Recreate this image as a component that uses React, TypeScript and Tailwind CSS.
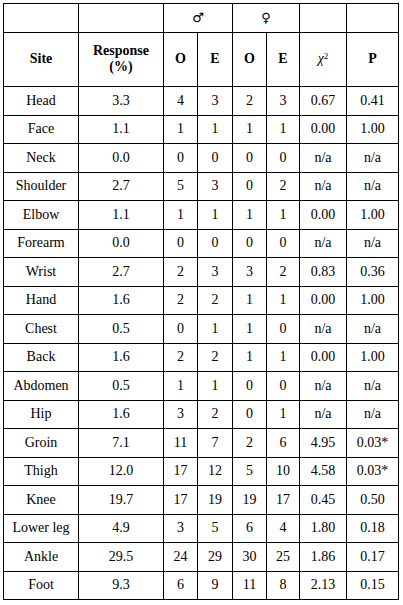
const rows: string[][] = [
  ["Head", "3.3", "4", "3", "2", "3", "0.67", "0.41"],
  ["Face", "1.1", "1", "1", "1", "1", "0.00", "1.00"],
  ["Neck", "0.0", "0", "0", "0", "0", "n/a", "n/a"],
  ["Shoulder", "2.7", "5", "3", "0", "2", "n/a", "n/a"],
  ["Elbow", "1.1", "1", "1", "1", "1", "0.00", "1.00"],
  ["Forearm", "0.0", "0", "0", "0", "0", "n/a", "n/a"],
  ["Wrist", "2.7", "2", "3", "3", "2", "0.83", "0.36"],
  ["Hand", "1.6", "2", "2", "1", "1", "0.00", "1.00"],
  ["Chest", "0.5", "0", "1", "1", "0", "n/a", "n/a"],
  ["Back", "1.6", "2", "2", "1", "1", "0.00", "1.00"],
  ["Abdomen", "0.5", "1", "1", "0", "0", "n/a", "n/a"],
  ["Hip", "1.6", "3", "2", "0", "1", "n/a", "n/a"],
  ["Groin", "7.1", "11", "7", "2", "6", "4.95", "0.03*"],
  ["Thigh", "12.0", "17", "12", "5", "10", "4.58", "0.03*"],
  ["Knee", "19.7", "17", "19", "19", "17", "0.45", "0.50"],
  ["Lower leg", "4.9", "3", "5", "6", "4", "1.80", "0.18"],
  ["Ankle", "29.5", "24", "29", "30", "25", "1.86", "0.17"],
  ["Foot", "9.3", "6", "9", "11", "8", "2.13", "0.15"],
];

const cell =
  "border border-black text-center align-middle p-0 font-['Liberation_Serif','Times_New_Roman',serif] text-[14px] leading-[16px]";

export default function App() {
  return (
    <div className="bg-white w-[403px] h-[605px] p-[3px] font-['Liberation_Serif','Times_New_Roman',serif] text-[14px] text-black">
      <table className="border-collapse table-fixed w-[395px]">
        <colgroup>
          <col className="w-[75px]" />
          <col className="w-[85px]" />
          <col className="w-[34px]" />
          <col className="w-[35px]" />
          <col className="w-[34px]" />
          <col className="w-[33px]" />
          <col className="w-[47px]" />
          <col className="w-[52px]" />
        </colgroup>
        <thead>
          <tr className="h-[28.5px]">
            <td className={cell}></td>
            <td className={cell}></td>
            <td className={cell} colSpan={2}>
              <span className="font-['DejaVu_Sans',sans-serif] text-[13px]">♂</span>
            </td>
            <td className={cell} colSpan={2}>
              <span className="font-['DejaVu_Sans',sans-serif] text-[13px]">♀</span>
            </td>
            <td className={cell}></td>
            <td className={cell}></td>
          </tr>
          <tr className="h-[54.5px]">
            <td className={cell + " font-bold"}>Site</td>
            <td className={cell + " font-bold"}>
              Response
              <br />
              (%)
            </td>
            <td className={cell + " font-bold"}>O</td>
            <td className={cell + " font-bold"}>E</td>
            <td className={cell + " font-bold"}>O</td>
            <td className={cell + " font-bold"}>E</td>
            <td className={cell}>
              <i>χ</i>
              <sup className="text-[9px]">2</sup>
            </td>
            <td className={cell + " font-bold"}>P</td>
          </tr>
        </thead>
        <tbody>
          {rows.map((r) => (
            <tr key={r[0]} className="h-[28.5px]">
              {r.map((v, i) => (
                <td key={i} className={cell}>
                  {v}
                </td>
              ))}
            </tr>
          ))}
        </tbody>
      </table>
    </div>
  );
}
